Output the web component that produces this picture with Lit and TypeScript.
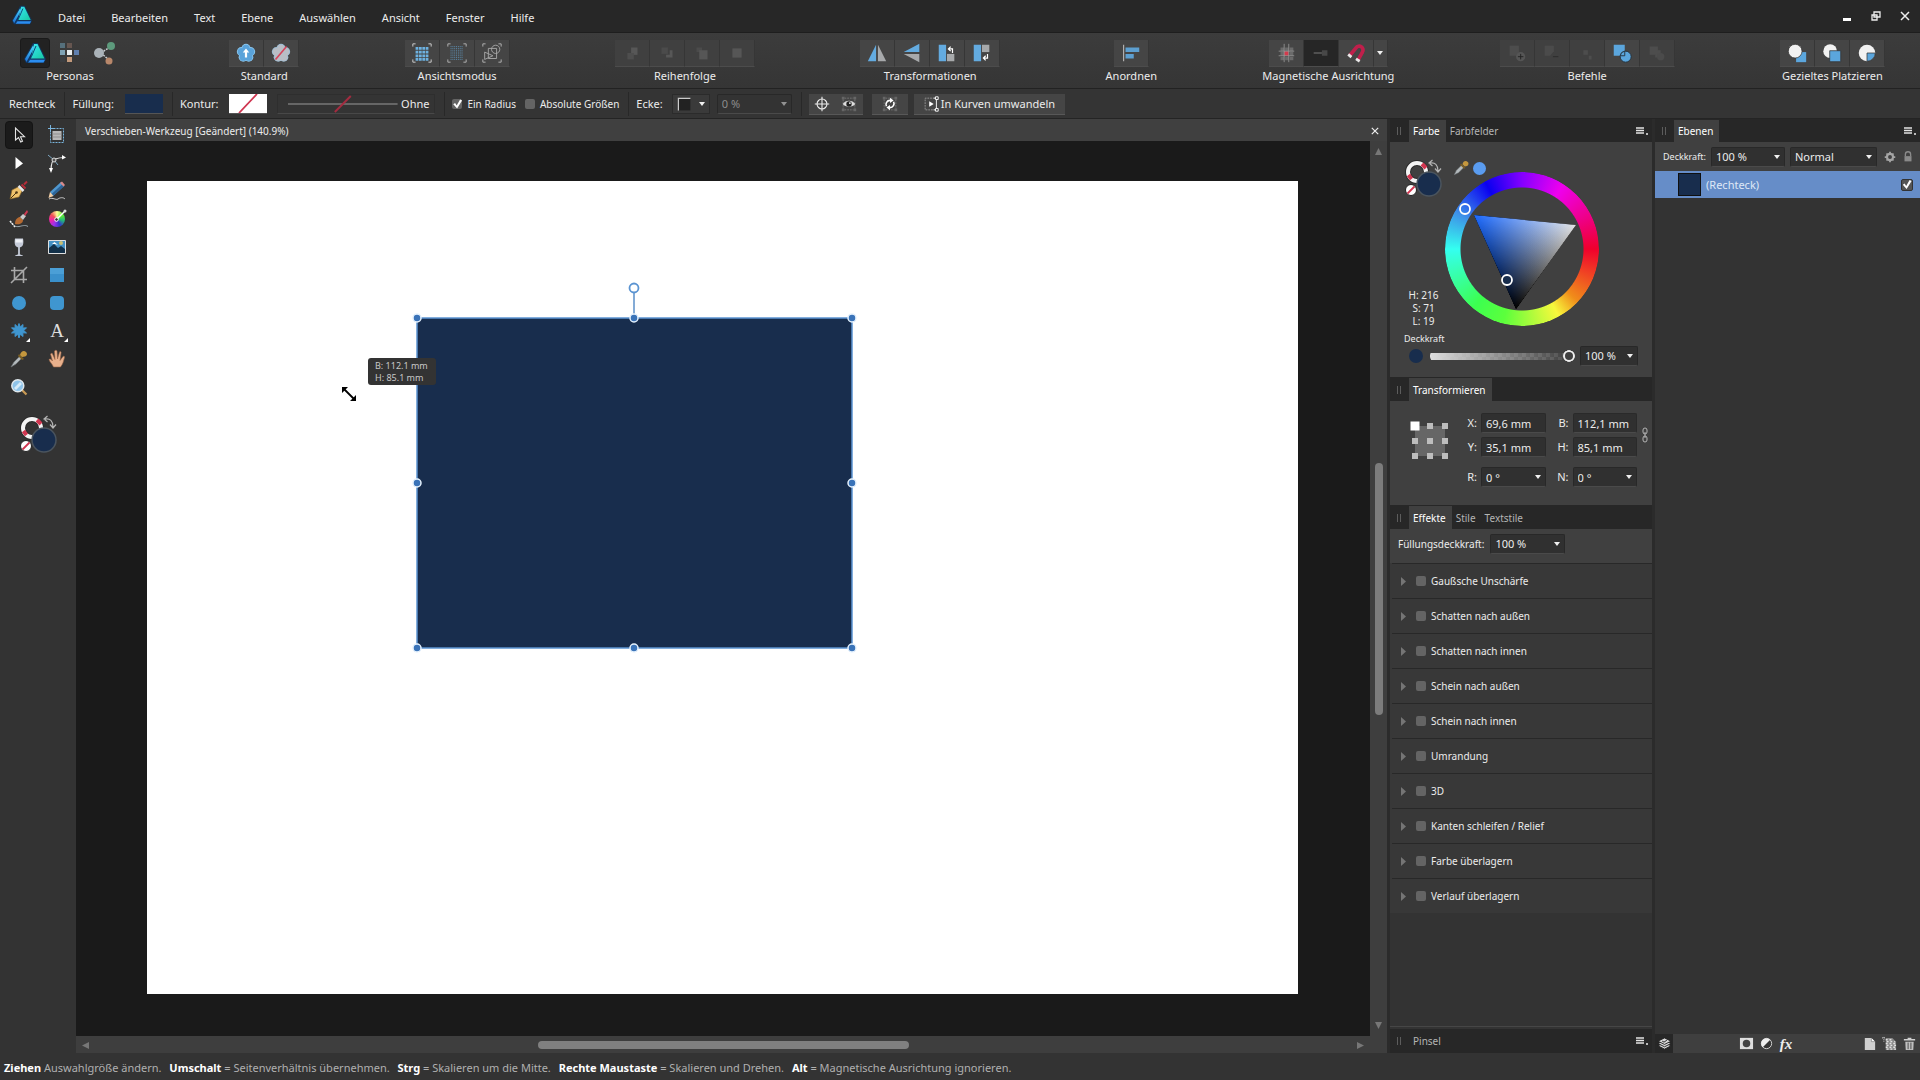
import { LitElement, html, svg, css, nothing, TemplateResult } from "lit";
import { customElement, state } from "lit/decorators.js";

type Icon = TemplateResult;

const NAVY = "#182d4d";

const logo = (id: string): Icon => html`
  <svg viewBox="0 0 24 24">
    <defs>
      <linearGradient id="${id}a" x1="0" y1="0" x2="1" y2="1">
        <stop offset="0" stop-color="#37e6f5" /><stop offset="1" stop-color="#17c9a0" />
      </linearGradient>
      <linearGradient id="${id}b" x1="0" y1="0" x2="0" y2="1">
        <stop offset="0" stop-color="#4ad9ff" /><stop offset="1" stop-color="#1c6fd6" />
      </linearGradient>
    </defs>
    <path d="M10 2h5l8 16-2 4H3l-2-4z" fill="#12345c" />
    <path d="M11 3h3.5l7 14.500H8z" fill="url(#${id}a)" />
    <path d="M10 4.500 2 18l1.500 3L11 7z" fill="url(#${id}b)" />
    <path d="M7 18.800h15L20.500 21.500H5z" fill="#2b8df0" />
    <path d="M13 5 8.500 15.500l-3.500 5" fill="none" stroke="#0f3f78" />
  </svg>`;

const petals = (fill: string, edge: string) => html`<svg viewBox="0 0 24 24">
    <g fill=${edge}><circle cx="12" cy="7" r="5" /><circle cx="17" cy="10.500" r="5" /><circle cx="15" cy="16.500" r="5" /><circle cx="9" cy="16.500" r="5" /><circle cx="7" cy="10.500" r="5" /></g>
    <g fill=${fill}><circle cx="12" cy="7" r="4" /><circle cx="17" cy="10.500" r="4" /><circle cx="15" cy="16.500" r="4" /><circle cx="9" cy="16.500" r="4" /><circle cx="7" cy="10.500" r="4" /><circle cx="12" cy="12" r="5" /></g>
    ${fill === "#5aa3da"
      ? svg`<path d="M12 7l3.500 4.500h-2.300V17h-2.400v-5.500H8.500z" fill="#fff" />`
      : svg`<path d="M6 19 18 5" stroke="#d6455c" stroke-width="1.800" />`}
  </svg>`;

const icons: Record<string, Icon> = {
  pixel: html`<svg viewBox="0 0 24 24">
    <path d="M2 2h5v5H2z" fill="#56707c" /><path d="M9 2h5v5H9z" fill="#665650" />
    <path d="M2 9h5v5H2z" fill="#7fa3b5" /><path d="M9 9h5v5H9z" fill="#e9eef0" /><path d="M16 9h5v5h-5z" fill="#5f7fae" />
    <path d="M9 16h5v5H9z" fill="#c39a7c" /><path d="M2 16h5v5H2z" fill="#3c3f42" /></svg>`,
  share: html`<svg viewBox="0 0 24 24">
    <path d="M8 12l9-6M8 12l8 7" stroke="#c8cccf" stroke-width="1.500" stroke-dasharray="2 1" />
    <circle cx="6" cy="12" r="5" fill="#aab2b8" /><circle cx="18" cy="5" r="4" fill="#5d9a7c" /><circle cx="16" cy="20" r="3.500" fill="#b8876a" /></svg>`,
  flower: petals("#5aa3da", "#8cc6ec"),
  flowerOff: petals("#b9bec6", "#9dbdd4"),
  gridA: html`<svg viewBox="0 0 24 24">
    <path d="M2 5V2h3M19 2h3v3M22 19v3h-3M5 22H2v-3" fill="none" stroke="#d4d4d4" />
    <path d="M5 7h14M5 11h14M5 15h14M5 19h14" stroke="#6db1e0" stroke-width="3" stroke-dasharray="3 .7" /></svg>`,
  gridB: html`<svg viewBox="0 0 24 24">
    <path d="M2 5V2h3M19 2h3v3M22 19v3h-3M5 22H2v-3" fill="none" stroke="#b8b8b8" />
    <path d="M5 5h14M5 7h14M5 9h14M5 11h14M5 13h14M5 15h14M5 17h14M5 19h14" stroke="#5d8fb3" stroke-dasharray="1 1" /></svg>`,
  outline: html`<svg viewBox="0 0 24 24">
    <path d="M2 5V2h3M19 2h3v3M22 19v3h-3M5 22H2v-3" fill="none" stroke="#b8b8b8" />
    <g fill="none" stroke="#a9a9a9"><circle cx="16" cy="8" r="4.500" /><path d="M8 7h9v11H8zM4 11l9 4-9 4z" /></g></svg>`,
  ord1: html`<svg viewBox="0 0 24 24"><path d="M11 6h7v8h-7z" fill="#575757" /><path d="M7 12h7v7H7z" fill="#4e4e4e" /></svg>`,
  ord2: html`<svg viewBox="0 0 24 24"><path d="M6 6h7v7H6z" fill="#4b4b4b" /><path d="M11 17h7V9h-3v5h-4z" fill="#575757" /></svg>`,
  ord3: html`<svg viewBox="0 0 24 24"><path d="M6 6h6v5H6z" fill="#4b4b4b" /><path d="M9 9h9v10H9z" fill="#565656" /></svg>`,
  ord4: html`<svg viewBox="0 0 24 24"><path d="M7 7h10v10H7z" fill="#565656" /></svg>`,
  flipH: html`<svg viewBox="0 0 24 24"><path d="M11 3v18H2z" fill="#63abe0" /><path d="M13 3v18h9z" fill="#a7a9ab" /></svg>`,
  flipV: html`<svg viewBox="0 0 24 24"><path d="M20 2v9H3z" fill="#63abe0" /><path d="M20 22v-9H3z" fill="#a7a9ab" /></svg>`,
  rotL: html`<svg viewBox="0 0 24 24"><path d="M3 3h8v18H3z" fill="#63abe0" /><path d="M12 13h8v8h-8z" fill="#a7a9ab" />
    <path d="M14 7.500h4V12M16 5l-2.500 2.500L16 10" fill="none" stroke="#fff" stroke-width="1.300" /></svg>`,
  rotR: html`<svg viewBox="0 0 24 24"><path d="M3 3h8v18H3z" fill="#63abe0" /><path d="M12 3h8v8h-8z" fill="#a7a9ab" />
    <path d="M14 17.500h4V13M16 15l-2.500 2.500L16 20" fill="none" stroke="#fff" stroke-width="1.300" /></svg>`,
  align: html`<svg viewBox="0 0 24 24"><path d="M4 3v18" stroke="#d0d0d0" /><path d="M6 6h15v5H6zM6 13h9v5H6z" fill="#5d9fd0" /></svg>`,
  snapGrid: html`<svg viewBox="0 0 24 24"><path d="M6 6h4v4H6zM11 6h4v4h-4zM16 6h4v4h-4zM6 11h4v4H6zM16 11h4v4h-4zM6 16h4v4H6zM11 16h4v4h-4zM16 16h4v4h-4z" fill="#6a6a6a" />
    <path d="M10 10h5v5h-5z" fill="#d43a4c" /><path d="M10 2v20M15 2v20M4 10h17M4 15h17" stroke="#a0a0a0" stroke-width=".800" /></svg>`,
  snapLine: html`<svg viewBox="0 0 24 24"><path d="M4 12h9" stroke="#555" stroke-width="2" /><path d="M13 9h6v6h-6z" fill="#484848" /></svg>`,
  magnet: html`<svg viewBox="0 0 24 24"><path d="M5 15l7-8.500a4 4 0 0 1 7 4.500l-5 9" fill="none" stroke="#c01f4b" stroke-width="4" />
    <path d="M3.500 13.500l3.500 3M12 18.500l4 2.500" stroke="#e8e8e8" stroke-width="3" /></svg>`,
  caret: html`<svg viewBox="0 0 8 8"><path d="M1 2h6L4 6z" fill="#f0f0f0" /></svg>`,
  add: html`<svg viewBox="0 0 24 24"><path d="M4 4h10v11H4z" fill="#4d4d4d" /><circle cx="16" cy="16" r="5" fill="#555" /><path d="M16 13v6M13 16h6" stroke="#222" /></svg>`,
  sub: html`<svg viewBox="0 0 24 24"><path d="M4 4h10v6l-4 5H4z" fill="#4b4b4b" /><path d="M13 16h6" stroke="#2a2a2a" /></svg>`,
  inter: html`<svg viewBox="0 0 24 24"><path d="M8 9h5v5H8zM14 15h3v4h-3z" fill="#4d4d4d" /></svg>`,
  divide: html`<svg viewBox="0 0 24 24"><path d="M3 3h12v12H3z" fill="#5ba6dd" /><circle cx="16" cy="16" r="6" fill="#5ba6dd" stroke="#23313c" />
    <path d="M15 10v5h-5a6 6 0 0 1 5-5z" fill="#5ba6dd" stroke="#23313c" /></svg>`,
  combine: html`<svg viewBox="0 0 24 24"><path d="M4 5h9v4h3v8h-6v-3H4z" fill="#4d4d4d" /><circle cx="16" cy="16" r="4" fill="#4b4b4b" /></svg>`,
  place1: html`<svg viewBox="0 0 24 24"><path d="M11 11h11v11H11z" fill="#5ba6dd" /><circle cx="10" cy="10" r="7.500" fill="#f2f2f2" stroke="#333" stroke-width=".800" /></svg>`,
  place2: html`<svg viewBox="0 0 24 24"><circle cx="10" cy="10" r="7.500" fill="#f2f2f2" /><path d="M9.500 9.500h12v12h-12z" fill="#5ba6dd" stroke="#333" stroke-width=".800" /></svg>`,
  place3: html`<svg viewBox="0 0 24 24"><circle cx="12" cy="12" r="9" fill="#f2f2f2" /><path d="M12 12h9a9 9 0 0 1-9 9z" fill="#5ba6dd" stroke="#333" stroke-width=".800" /></svg>`,
  target: html`<svg viewBox="0 0 20 20"><circle cx="10" cy="10" r="5.500" fill="none" stroke="#eee" stroke-width="1.200" /><path d="M10 2v16M2 10h16" stroke="#eee" stroke-width="1.200" /></svg>`,
  eye: html`<svg viewBox="0 0 20 20"><path d="M5 3.500h10M5 16.500h10M3.500 5v10M16.500 5v10" stroke="#777" stroke-dasharray="2 1" /><path d="M2 2h3v3H2zM15 2h3v3h-3zM2 15h3v3H2zM15 15h3v3h-3z" fill="#666" />
    <path d="M3 10c3-5 11-5 14 0-3 4-11 4-14 0z" fill="#ddd" /><circle cx="10" cy="10" r="3" fill="#222" /><circle cx="11" cy="9" r="1" fill="#fff" /></svg>`,
  cycle: html`<svg viewBox="0 0 20 20"><path d="M5 3.500h10M5 16.500h10M3.500 5v10M16.500 5v10" stroke="#777" stroke-dasharray="2 1" /><path d="M2 2h3v3H2zM15 2h3v3h-3zM2 15h3v3H2zM15 15h3v3h-3z" fill="#666" />
    <path d="M6 12.500a4.500 4.500 0 0 1 4-6.500M14 7.500a4.500 4.500 0 0 1-4 6.500" fill="none" stroke="#fff" stroke-width="1.800" /><path d="M10 3l4 3-4 3zM10 17l-4-3 4-3z" fill="#fff" /></svg>`,
  curves: html`<svg viewBox="0 0 20 20"><path d="M14 3.500H3.500v13H14" fill="none" stroke="#999" stroke-dasharray="2 1" /><path d="M8 7l5 3-5 3z" fill="#fff" />
    <path d="M13 3.500h3v13h-3" fill="none" stroke="#fff" /><path d="M15 2h3v3h-3zM15 15h3v3h-3z" fill="#444" stroke="#fff" /></svg>`,
  corner: html`<svg viewBox="0 0 20 20"><path d="M3 18V3h15v15" fill="#222" /><path d="M3 18V3h15" fill="none" stroke="#ccc" stroke-width="1.500" /></svg>`,
  grip: html`<svg viewBox="0 0 4 8"><path d="M.5 0v8M3.500 0v8" stroke="#5c5c5c" /></svg>`,
  menu: html`<svg viewBox="0 0 12 8"><path d="M0 1h8M0 3.500h8M0 6h8" stroke="#e4e4e4" stroke-width="1.500" /><path d="M10 6h2v2h-2z" fill="#bbb" /></svg>`,
  pipette: html`<svg viewBox="0 0 24 24"><path d="M3 21l3-6 7-7 3 3-7 7z" fill="#b4babd" stroke="#6d7376" stroke-width=".700" /><path d="M12 6l6 6-2 1-5-5z" fill="#7a5e22" /><path d="M14 7c1-5 5-5 7-3s1 6-4 6z" fill="#c4973d" /></svg>`,
  gear: html`<svg viewBox="0 0 16 16"><circle cx="8" cy="8" r="3.500" fill="none" stroke="#a5a5a5" stroke-width="2.500" /><path d="M8 2v2M8 12v2M2 8h2M12 8h2M4 4l1 1M11 11l1 1M12 4l-1 1M5 11l-1 1" stroke="#a5a5a5" stroke-width="2" /></svg>`,
  lock: html`<svg viewBox="0 0 16 16"><path d="M5 7V5a3 3 0 0 1 6 0v2" fill="none" stroke="#8a8a8a" stroke-width="1.500" /><path d="M4 7h8v6H4z" fill="#8a8a8a" /></svg>`,
  chain: html`<svg viewBox="0 0 8 16"><g fill="none" stroke="#b4b4b4"><rect x="2" y="1" width="4" height="6" rx="2" /><rect x="2" y="9" width="4" height="6" rx="2" /><path d="M4 5v6" /></g></svg>`,
  layers: html`<svg viewBox="0 0 16 16"><path d="M8 7l7 3.500L8 14l-7-3.500z" fill="#d8d8d8" stroke="#222" /><path d="M8 4.500L15 8l-7 3.500L1 8z" fill="#d8d8d8" stroke="#222" /><path d="M8 2l7 3.500L8 9 1 5.500z" fill="#d8d8d8" stroke="#222" /><path d="M5.500 5.500l2 1 3-2" fill="none" stroke="#222" /></svg>`,
  mask: html`<svg viewBox="0 0 16 16"><path d="M1 2h14v12H1z" fill="#dedede" /><circle cx="8" cy="8" r="4" fill="#444" /></svg>`,
  adjust: html`<svg viewBox="0 0 16 16"><circle cx="8" cy="8" r="5.500" fill="#333" stroke="#d8d8d8" /><path d="M12 4a5.500 5.500 0 1 0-8 8z" fill="#eee" /></svg>`,
  doc: html`<svg viewBox="0 0 16 16"><path d="M3 2h7l4 4v9H3z" fill="#cfcfcf" /><path d="M10 2v4h4" fill="#fff" stroke="#777" stroke-width=".700" /></svg>`,
  pixelDoc: html`<svg viewBox="0 0 16 16"><path d="M4 2h7l4 4v9H4z" fill="#8a8a8a" /><path d="M4 4h8M5 6h9M4 8h11M5 10h10M4 12h11M5 14h10" stroke="#e2e2e2" stroke-dasharray="2 2" stroke-width="1.500" /><path d="M0 2h4M2 1v5" stroke="#ddd" stroke-dasharray="1 1" /></svg>`,
  trash: html`<svg viewBox="0 0 16 16"><path d="M2 4h12M6 2.500h4" stroke="#d0d0d0" stroke-width="1.500" /><path d="M3.500 6h9l-.5 9H4z" fill="#c0c0c0" /><path d="M6.500 7v7M9.500 7v7" stroke="#444" /></svg>`,
};

const toolIcons: Array<[string, Icon]> = [
  ["Verschieben", html`<svg viewBox="0 0 24 24"><path d="M8.500 5v12l3-2.500 2.200 4.500 1.800-.8-2-4.500h4z" fill="#1c1c1c" stroke="#e4e4e4" stroke-width="1.100" /></svg>`],
  ["Zeichenfläche", html`<svg viewBox="0 0 24 24"><path d="M5.500 5.500h13v14h-13z" fill="none" stroke="#79b4dc" stroke-dasharray="2 1" /><path d="M7.500 8h9v9h-9z" fill="#b9b9b9" /><path d="M7.500 11h9M7.500 14h9" stroke="#8f8f8f" /><path d="M5.500 2v7M3 5.500h6" stroke="#79b4dc" /></svg>`],
  ["Knoten", html`<svg viewBox="0 0 24 24"><path d="M8.500 6v12l7.500-5.500z" fill="#fff" /></svg>`],
  ["Ecken", html`<svg viewBox="0 0 24 24"><path d="M6 20c0-5 1-11 4-12s7-1.500 10-1.500" fill="none" stroke="#e6e6e6" stroke-width="1.200" /><path d="M3 4l6 5 4 5" fill="none" stroke="#7fa9c4" /><circle cx="9" cy="9" r="2" fill="#555" stroke="#ddd" /><path d="M17 4l4 2.500-4 2zM4 17l2 5 2-5z" fill="#fff" /></svg>`],
  ["Zeichenstift", html`<svg viewBox="0 0 24 24"><path d="M3 20l2-9 6-3 4 4-3 6z" fill="#efc26b" stroke="#8c6424" stroke-width=".600" /><path d="M3.500 19.500l6-6" stroke="#4a3413" /><circle cx="9.500" cy="13.500" r="1.300" fill="#4a3413" /><path d="M11.500 7l5 5" stroke="#e8e8e8" stroke-width="2.500" /><path d="M14.500 5.500l4 4M17 5.500l3-3" stroke="#b42d3a" stroke-width="2" /></svg>`],
  ["Buntstift", html`<svg viewBox="0 0 24 24"><path d="M5 13L16 3l3 4L8 17z" fill="#4f97cf" /><path d="M6.500 15L17.500 5l2 2L8 17z" fill="#2d6497" /><path d="M5 13l3.500 4-5 2z" fill="#f2cfa6" /><path d="M15 4l2-1.500 3 3.500-1.500 1.500z" fill="#d98a8a" /><path d="M4 20c4-2 7 1.500 9 0s5-2 7 0" fill="none" stroke="#cfcfcf" /></svg>`],
  ["Pinsel", html`<svg viewBox="0 0 24 24"><path d="M8 17c0-5 3-7 5-7l3 3c0 3-3 5-8 4z" fill="#b56a32" /><path d="M13 10l3-3 3 2-3 4z" fill="#c9c9c9" /><path d="M17 7l3-4 1 2-3 4z" fill="#d03a52" /><path d="M3 14c3 5 6 6 9 5.500s6-2 9 0" fill="none" stroke="#9aa7ad" /><path d="M3 14l5 6" stroke="#eee" stroke-width="1.500" stroke-dasharray="2 1" /></svg>`],
  ["Füllung", html`<span class="tool-wheel"></span><svg viewBox="0 0 24 24"><path d="M12 12L20 4" stroke="#fff" stroke-width="1.500" /><circle cx="20" cy="4" r="1.500" fill="#ddd" /><circle cx="11.500" cy="12.500" r="1.800" fill="#333" stroke="#fff" /></svg>`],
  ["Transparenz", html`<svg viewBox="0 0 24 24"><path d="M8 3.500h8c1 5 0 9-4 9s-5-4-4-9z" fill="#c5cbd8" /><path d="M8.500 4.500h7v3h-7z" fill="#eef1f6" /><path d="M12 12v8" stroke="#c5cbd8" stroke-width="1.800" /><path d="M8 21c1-2 7-2 8 0z" fill="#c5cbd8" /></svg>`],
  ["Bild platzieren", html`<svg viewBox="0 0 24 24"><path d="M3.500 5.500h17v13h-17z" fill="#4591c4" stroke="#e0e0e0" /><path d="M4 13l5-4 4 4 3-2 4 3v4H4z" fill="#123049" /><path d="M7 9l2.500-2L13 10l-3-1z" fill="#fff" /><circle cx="16" cy="8" r="2" fill="#c9bf73" /></svg>`],
  ["Beschneiden", html`<svg viewBox="0 0 24 24"><path d="M7.500 4v12.500H20M4 7.500h12.500V20M4 20L20 4" fill="none" stroke="#a8a8a8" stroke-width="1.600" /></svg>`],
  ["Rechteck", html`<svg viewBox="0 0 24 24"><path d="M5 5h14v14H5z" fill="#3a90cb" /><path d="M5 5h14v6H5z" fill="#4b9fd6" /></svg>`],
  ["Ellipse", html`<svg viewBox="0 0 24 24"><circle cx="12" cy="12" r="7" fill="#3f96d0" /></svg>`],
  ["Abgerundetes Rechteck", html`<svg viewBox="0 0 24 24"><rect x="5" y="5" width="14" height="14" rx="4" fill="#3f96d0" /></svg>`],
  ["Stern", html`<svg viewBox="0 0 24 24"><path d="M12 4.500l1.200 3.500L16 5.500l-.2 3.600 3.700-.3-2.700 2.700 2.700 2.500-3.700-.2.2 3.700-2.800-2.300L12 19l-1.200-3.800L8 17.500l.2-3.700-3.700.2 2.700-2.500-2.700-2.700 3.700.3L8 5.500 10.800 8z" fill="#3f96d0" stroke="#3f96d0" /><path d="M23 19v4h-4z" fill="#fff" /></svg>`],
  ["Text", html`<svg viewBox="0 0 24 24"><path d="M23 19v4h-4z" fill="#fff" /></svg>`],
  ["Farbpipette", html`<svg viewBox="0 0 24 24"><path d="M4 20l3-5 6-6 2 2-6 6z" fill="#b4babd" stroke="#6d7376" stroke-width=".700" /><path d="M12 7l5 5-2 1-4-4z" fill="#7a5e22" /><path d="M13 8c1-4 4-5 6-3s1 5-4 5z" fill="#c4973d" /></svg>`],
  ["Ansicht", html`<svg viewBox="0 0 24 24"><path d="M8.500 20c-1-3-4-5-4.500-7.500 1-1 2.500 0 3.500 1.500L5.500 7c1-1 2-1 2.500 1l2 4.500L9.500 4c1-1 2-1 2.500 0l.5 8 2-7c1-1 2 0 1.500 1.500l-1 7L18 9.500c1-.8 1.800 0 1.500 1C18.500 14 18 17 15.500 20z" fill="#e8b08c" stroke="#9a6446" stroke-width=".600" /></svg>`],
  ["Zoom", html`<svg viewBox="0 0 24 24"><path d="M15 15l4.500 4.500" stroke="#c99a55" stroke-width="2.200" /><circle cx="10.800" cy="10.800" r="6" fill="#8fc4ea" stroke="#dfe7ec" stroke-width="1.500" /><path d="M7 13l6-6 2 2-6 6z" fill="#d6ecfa" /></svg>`],
];

const fillStroke = html`
  <svg class="fillstroke" viewBox="0 0 40 40">
    <circle cx="13" cy="13" r="9" fill="none" stroke="#2a2a2a" stroke-width="6" />
    <circle cx="13" cy="13" r="9" fill="none" stroke="#f4f4f4" stroke-width="4" />
    <path d="M18 5l4 4M4.500 16l3 4" stroke="#d13650" stroke-width="4" />
    <circle cx="25" cy="25" r="12" fill=${NAVY} stroke="#4a545e" stroke-width="1.500" />
    <circle cx="7" cy="31" r="5.500" fill="#fff" stroke="#222" /><path d="M3.500 34.500l7-7" stroke="#d13650" stroke-width="1.800" />
    <path d="M26 4c5-1 8 2 8 8M28.500 1L25 4l3.500 3M31 9.500l3 3.500 3-3.500" fill="none" stroke="#b5b5b5" stroke-width="1.200" />
  </svg>`;

const toolbarGroups: Array<{ label: string; items: Array<[string, string, string?]> }> = [
  { label: "Standard", items: [["flower", "Synchronisieren"], ["flowerOff", "Zurücksetzen"]] },
  { label: "Ansichtsmodus", items: [["gridA", "Pixel"], ["gridB", "Pixel Retina"], ["outline", "Gliederung"]] },
  { label: "Reihenfolge", items: [["ord1", "Ganz nach hinten", "off"], ["ord2", "Nach hinten", "off"], ["ord3", "Nach vorne", "off"], ["ord4", "Ganz nach vorne", "off"]] },
  { label: "Transformationen", items: [["flipH", "Horizontal spiegeln"], ["flipV", "Vertikal spiegeln"], ["rotL", "Nach links drehen"], ["rotR", "Nach rechts drehen"]] },
  { label: "Anordnen", items: [["align", "Ausrichtung"]] },
  { label: "Magnetische Ausrichtung", items: [["snapGrid", "Am Raster"], ["snapLine", "An Linien", "pressed"], ["magnet", "Magnet"], ["caret", "Optionen", "narrow"]] },
  { label: "Befehle", items: [["add", "Addieren", "off"], ["sub", "Subtrahieren", "off"], ["inter", "Schnittmenge", "off"], ["divide", "Teilen"], ["combine", "Kombinieren", "off"]] },
  { label: "Gezieltes Platzieren", items: [["place1", "Dahinter"], ["place2", "Davor"], ["place3", "Innen"]] },
];

const effects = ["Gaußsche Unschärfe", "Schatten nach außen", "Schatten nach innen", "Schein nach außen", "Schein nach innen",
  "Umrandung", "3D", "Kanten schleifen / Relief", "Farbe überlagern", "Verlauf überlagern"];

const hints: Array<[string, string]> = [
  ["Ziehen", " Auswahlgröße ändern. "],
  ["Umschalt", " = Seitenverhältnis übernehmen. "],
  ["Strg", " = Skalieren um die Mitte. "],
  ["Rechte Maustaste", " = Skalieren und Drehen. "],
  ["Alt", " = Magnetische Ausrichtung ignorieren."],
];

function handle(x: number, y: number) {
  return svg`<circle cx=${x} cy=${y} r="4" fill="#3a73b8" stroke="#e6f2fd" stroke-width="1.500" />`;
}

function anchorDot(x: number, y: number) {
  const first = x === 5 && y === 5;
  const s = first ? 9 : 6;
  return svg`<rect x=${x - s / 2} y=${y - s / 2} width=${s} height=${s} fill=${first ? "#fff" : "#bdbdbd"} />`;
}

@customElement("app-root")
export class AppRoot extends LitElement {
  @state() private tool = 0;

  static styles = css`
    :host { display: block; font: 11px/14px "Noto Sans", "Open Sans", sans-serif; color: #ececec; }
    *, *::before, *::after { box-sizing: border-box; }
    button, input, select { font: inherit; color: inherit; margin: 0; padding: 0; border: 0; background: none; border-radius: 0; }
    svg { display: block; }
    a { color: inherit; text-decoration: none; }
    .app { min-height: 100vh; display: flex; flex-direction: column; background: #333; }

    .menubar { display: flex; align-items: center; height: 33px; padding: 0 1px 0 11px; background: #272727; border-bottom: 1px solid #1e1e1e; }
    .menubar .logo { width: 22px; height: 22px; margin-bottom: 3px; }
    .menus { display: flex; gap: 26px; margin-left: 25px; flex: 1; padding-top: 4px; }
    .winbtn { width: 29px; height: 24px; display: grid; place-items: center; }
    .winbtn svg { width: 10px; height: 10px; }

    .toolbar { display: flex; justify-content: space-between; height: 56px; padding: 5px 35px 0 20px; background: linear-gradient(#3c3c3c, #353535); border-bottom: 1px solid #222; }
    .group { display: flex; flex-direction: column; align-items: center; line-height: 16px; white-space: nowrap; }
    .group-row { display: flex; align-items: center; height: 30px; }
    .tbtn { width: 35px; height: 27px; display: grid; place-items: center; background: #454545; border-right: 1px solid #363636; border-bottom: 1px solid #4c4c4c; }
    .tbtn svg { width: 22px; height: 22px; }
    .tbtn.off { background: #404040; }
    .tbtn.pressed { background: #262626; }
    .tbtn.narrow { width: 14px; }
    .tbtn.narrow svg { width: 8px; height: 8px; }
    .personas { margin-right: 4px; }
    .personas .group-row { gap: 5px; }
    .pbtn { width: 30px; height: 30px; display: grid; place-items: center; border-radius: 3px; }
    .pbtn svg { width: 24px; height: 24px; }
    .pbtn.active { background: #222; border: 1px solid #1a1a1a; }

    .context { display: flex; align-items: center; height: 30px; padding: 1px 9px 0; border-bottom: 1px solid #242424; background: #343434; white-space: nowrap; }
    .sep { width: 1px; height: 24px; background: #282828; margin: 0 7px 0 9px; }
    .swatch { width: 38px; height: 20px; margin-left: 11px; border-bottom: 1px solid #555; }
    .swatch.fill { background: #182d4d; }
    .swatch.none { background: #fff; }
    .stroke { width: 158px; height: 20px; margin-left: 10px; display: flex; align-items: center; justify-content: flex-end; gap: 3px; padding-right: 5px; border: 1px solid #2e2e2e; border-bottom-color: #484848; }
    .stroke svg { flex: 1; height: 18px; margin-left: 10px; }
    .check { display: inline-flex; align-items: center; gap: 5px; font-size: 10px; }
    .check + .check { margin-left: 9px; }
    input[type="checkbox"] { appearance: none; width: 10px; height: 10px; flex: none; border-radius: 2px; background: #646464; display: grid; place-items: center; }
    input[type="checkbox"]:checked::before { content: ""; width: 10px; height: 10px; background: #fff; clip-path: polygon(8% 52%, 26% 40%, 42% 64%, 76% 4%, 96% 14%, 46% 96%); }
    .cornerbtn { display: flex; align-items: center; justify-content: space-around; width: 38px; height: 20px; margin-left: 9px; border: 1px solid #2b2b2b; background: #3a3a3a; }
    .cornerbtn svg:first-child { width: 16px; height: 16px; }
    .cornerbtn svg:last-child { width: 8px; height: 8px; }

    .select { display: inline-grid; align-items: center; height: 20px; background: #303030; border: 1px solid #282828; border-bottom-color: #4a4a4a; border-radius: 2px; font-size: 11px; }
    .select select, .select svg { grid-area: 1 / 1; }
    .select select { appearance: none; width: 100%; height: 18px; padding: 0 16px 0 4px; outline: none; }
    .select svg { width: 8px; height: 8px; justify-self: end; margin-right: 3px; pointer-events: none; }
    .select.dim { margin-left: 7px; width: 75px; color: #8c8c8c; background: #333; }
    .select.dim svg { opacity: 0.5; }
    .cbtn { display: flex; align-items: center; justify-content: center; width: 27px; height: 21px; background: #454545; border-bottom: 1px solid #585858; }
    .cbtn svg { width: 18px; height: 18px; }
    .cbtn.wide { width: 36px; margin-left: 9px; }
    .cbtn.text { width: auto; margin-left: 6px; padding: 0 10px 0 8px; gap: 1px; }

    .work { flex: 1; display: flex; gap: 3px; background: #2b2b2b; }
    .left { flex: 1; display: flex; min-width: 0; }
    .tools { width: 76px; background: #333; padding: 2px 5px; display: flex; flex-direction: column; gap: 14px; }
    .toolgrid { display: grid; grid-template-columns: 28px 28px; column-gap: 10px; }
    .tool { width: 28px; height: 28px; display: grid; place-items: center; border-radius: 4px; }
    .tool > * { grid-area: 1 / 1; }
    .tool svg { width: 24px; height: 24px; }
    .tool.active { background: #1b1b1b; border: 1px solid #141414; }
    .tool .glyph { font: 19px/20px "Liberation Serif", serif; color: #ddd; }
    .tool-wheel { width: 16px; height: 16px; border-radius: 50%; background: conic-gradient(#ff9, #6e3, #2b7, #33c, #93e, #e2a, #e55, #ff9); }
    .fillstroke { width: 40px; height: 40px; }
    .tools .fillstroke { margin-left: 14px; }

    .doc { flex: 1; display: grid; grid-template: 22px 1fr 17px / 1fr 17px; background: #3e3e3e; min-width: 0; }
    .doctab { grid-column: 1 / 3; display: flex; align-items: center; justify-content: space-between; padding: 1px 8px 0 9px; background: #404040; }
    .doctab span { font-size: 10px; }
    .doctab button svg { width: 8px; height: 8px; }
    .canvas { background: #1a1a1a; padding: 40px 72px 42px 71px; display: grid; }
    .page { background: #fff; position: relative; min-height: 400px; }
    .selection { position: absolute; left: 263px; top: 99px; width: 449px; height: 376px; overflow: visible; }
    .tip { position: absolute; left: 221px; top: 177px; width: 68px; height: 27px; padding: 2px 7px 0; border-radius: 3px; background: #333; color: #c8c8c8; font-size: 9px; line-height: 12px; white-space: nowrap; }
    .cursor { position: absolute; left: 194px; top: 205px; width: 16px; height: 16px; }
    .vbar { display: flex; flex-direction: column; align-items: center; padding: 7px 0; }
    .vbar i { width: 8px; height: 252px; border-radius: 4px; background: #7c7c7c; }
    .hbar { display: flex; align-items: center; padding: 1px 6px 0; }
    .hbar i { width: 371px; height: 8px; border-radius: 4px; background: #808080; }
    .arrow { width: 7px; height: 7px; }
    .g1 { flex: 307; } .g2 { flex: 306; } .h1 { flex: 447; } .h2 { flex: 447; }

    .panels { width: 262px; display: flex; flex-direction: column; background: #333; font-size: 10px; }
    .head { display: flex; align-items: stretch; height: 24px; padding: 1px 4px 0 7px; background: #272727; }
    .head > svg { width: 4px; height: 8px; align-self: center; margin-right: 8px; flex: none; }
    .head.first { height: 23px; }
    .head.closed { padding-top: 0; }
    .tab { padding: 0 5px 0 4px; color: #b4b4b4; }
    .tab.on { background: #404040; color: #fff; padding-right: 6px; }
    .head .menu { margin-left: auto; }
    .menu svg { width: 12px; height: 8px; }
    .body { background: #404040; }

    .color { height: 235px; padding: 17px 14px 0 14px; }
    .colorgrid { display: grid; grid-template-columns: 41px 154px; grid-template-rows: 169px; }
    .colorleft { display: flex; flex-direction: column; justify-content: space-between; }
    .hsl { text-align: center; line-height: 13px; margin-right: 2px; }
    .wheel, .picker { grid-area: 1 / 2; }
    .wheel { margin-top: 13px; display: grid; height: 154px; }
    .wheel > * { grid-area: 1 / 1; width: 154px; height: 154px; }
    .ring { border-radius: 50%; background: conic-gradient(from 90deg, #f0002c, #f08c1a 12%, #f8f83c 17%, #5cff3c 29%, #3cff50 36%, #34fff0 50%, #3e92e8 58%, #0a00f0 67%, #8400ff 75%, #ee00ee 84%, #ee0090 92%, #f0002c); mask: radial-gradient(circle, transparent 61px, #000 62px); }
    .wheel svg { isolation: isolate; }
    .light { mix-blend-mode: plus-lighter; }
    .picker { display: flex; align-items: center; gap: 3px; align-self: start; margin-left: 7px; }
    .picker svg { width: 18px; height: 18px; }
    .picker i { width: 13px; height: 13px; border-radius: 50%; background: #5a9cf0; }
    .small { display: block; font-size: 9px; margin-top: 4px; }
    .oprow { display: flex; align-items: center; padding-left: 5px; }
    .oprow i { width: 14px; height: 14px; border-radius: 50%; background: #182d4d; margin-right: 7px; }
    .oprow input[type="range"] { appearance: none; flex: 1; min-width: 0; height: 12px; background: linear-gradient(90deg, #ddd, rgba(56, 56, 56, 0.8)), repeating-conic-gradient(#888 0 25%, #333 0 50%) 0 3px / 8px 8px; mask: linear-gradient(#000, #000) center / 100% 7px no-repeat, radial-gradient(circle at calc(100% - 6px) 50%, #000 6px, transparent 6px); border-radius: 5px; }
    .oprow input[type="range"]::-webkit-slider-thumb { appearance: none; width: 12px; height: 12px; border-radius: 50%; border: 2px solid #eee; background: #404040; }
    .oprow .select { width: 58px; margin-left: 5px; }

    .transform { display: grid; grid-template-columns: 40px 23px 1fr 19px 1fr 8px; grid-template-rows: 20px 20px 20px; gap: 4px; padding: 12px 3px 12px 20px; height: 104px; align-items: center; font-size: 11px; }
    .transform label { text-align: right; }
    .transform input { width: 100%; height: 20px; padding: 0 4px; background: #303030; border: 1px solid #2a2a2a; border-bottom-color: #4a4a4a; border-radius: 2px; }
    .anchor { grid-area: 1 / 1 / 3 / 2; width: 40px; height: 40px; align-self: end; margin-bottom: -4px; }
    .chain { grid-area: 1 / 6 / 3 / 7; }
    .chain svg { width: 8px; height: 16px; }
    .transform .last { align-self: end; margin-bottom: -6px; line-height: 20px; }
    .transform .select { width: 100%; }

    .fillop { display: flex; align-items: center; gap: 6px; height: 34px; padding: 0 8px 5px; }
    .fillop .select { width: 75px; }
    .effects { margin: 0; padding: 0 0 0 2px; list-style: none; background: #383838; }
    .effects li { display: flex; align-items: center; height: 35px; padding-left: 8px; border-top: 1px solid #282828; }
    .effects button svg { width: 7px; height: 9px; }
    .effects .check { margin-left: 9px; }
    .rest { flex: 1; border-bottom: 1px solid #464646; margin-bottom: 2px; }

    .layers { width: 265px; display: flex; flex-direction: column; background: #333; font-size: 10px; }
    .opts { display: flex; align-items: center; height: 29px; padding: 0 5px 0 8px; background: #404040; }
    .opts label { font-size: 9px; margin-right: 5px; }
    .opts .select { width: 74px; }
    .opts .select.blend { flex: 1; margin: 0 2px 0 5px; }
    .opts button { margin-left: 4px; }
    .opts button svg { width: 14px; height: 14px; }
    .layer { display: flex; align-items: center; height: 27px; padding: 0 7px 0 23px; background: #668dc8; color: #dfe8f6; font-size: 11px; }
    .layer i { width: 23px; height: 23px; background: #182d4d; border: 1px solid #101010; margin-right: 5px; }
    .layer input { margin-left: auto; width: 12px; height: 12px; background: #555; border: 1px solid #333; }
    .grow { flex: 1; }
    .lfoot { display: flex; justify-content: space-between; height: 19px; background: #3f3f3f; padding-right: 1px; }
    .lfoot div { display: flex; align-items: center; }
    .lfoot button { width: 20px; height: 19px; display: grid; place-items: center; }
    .lfoot button svg { width: 15px; height: 15px; }
    .lfoot .cur { width: 18px; background: #272727; }
    .lfoot .fx { font: italic bold 15px/16px "Liberation Serif", serif; color: #eee; }

    .status { height: 27px; padding: 3px 4px 0; display: flex; align-items: center; gap: 5px; white-space: pre; color: #b0b0b0; }
    .status b { color: #fff; }
  `;

  private select(id: string, label: string, value: string, cls = "") {
    return html`<span class="select ${cls}"><select id=${id} aria-label=${label}><option>${value}</option></select>${icons.caret}</span>`;
  }

  private arrow(d: string) {
    return html`<svg class="arrow" viewBox="0 0 8 8"><path d=${d} fill="#777" /></svg>`;
  }

  private head(tabs: string[], menu: boolean, cls = "") {
    return html`<div class="head ${cls}">${icons.grip}
      ${tabs.map((t, i) => html`<button class="tab ${i === 0 && cls !== "closed" ? "on" : ""}">${t}</button>`)}
      ${menu ? html`<button class="menu" aria-label="Menü">${icons.menu}</button>` : nothing}</div>`;
  }

  private renderTop() {
    return html`
      <header class="menubar">
        <span class="logo">${logo("m")}</span>
        <nav class="menus">
          ${["Datei", "Bearbeiten", "Text", "Ebene", "Auswählen", "Ansicht", "Fenster", "Hilfe"].map((m) => html`<a href="#">${m}</a>`)}
        </nav>
        <button class="winbtn" aria-label="Minimieren"><svg viewBox="0 0 10 10"><path d="M1 7h8v3H1z" fill="#fff" /></svg></button>
        <button class="winbtn" aria-label="Wiederherstellen"><svg viewBox="0 0 10 10"><path d="M3 1h6v5H3zM1 4h5v5H1z" fill="#272727" stroke="#eee" stroke-width="1.300" /></svg></button>
        <button class="winbtn" aria-label="Schließen"><svg viewBox="0 0 10 10"><path d="M1 1l8 8M9 1L1 9" stroke="#eee" stroke-width="1.500" /></svg></button>
      </header>
      <div class="toolbar">
        <div class="group personas">
          <div class="group-row">
            <button class="pbtn active" aria-label="Designer">${logo("p")}</button>
            <button class="pbtn" aria-label="Pixel">${icons.pixel}</button>
            <button class="pbtn" aria-label="Export">${icons.share}</button>
          </div>
          <span>Personas</span>
        </div>
        ${toolbarGroups.map((g) => html`<div class="group">
          <div class="group-row">${g.items.map(([i, l, c]) => html`<button class="tbtn ${c ?? ""}" aria-label=${l}>${icons[i]}</button>`)}</div>
          <span>${g.label}</span></div>`)}
      </div>
      <div class="context">
        <span>Rechteck</span><span class="sep"></span>
        <span>Füllung:</span><button class="swatch fill" aria-label="Füllung"></button><span class="sep"></span>
        <span>Kontur:</span><button class="swatch none" aria-label="Kontur"><svg viewBox="0 0 38 19"><path d="M10 19L28 0" stroke="#cf3550" stroke-width="1.800" /></svg></button>
        <button class="stroke"><svg viewBox="0 0 110 18" preserveAspectRatio="none"><path d="M0 9h110" stroke="#999" /><path d="M47 17L63 1" stroke="#a32c40" stroke-width="2" /></svg>Ohne</button>
        <span class="sep"></span>
        <label class="check"><input type="checkbox" checked />Ein Radius</label>
        <label class="check"><input type="checkbox" />Absolute Größen</label>
        <span class="sep"></span>
        <span>Ecke:</span><button class="cornerbtn" aria-label="Ecke">${icons.corner}${icons.caret}</button>
        ${this.select("radius", "Eckenradius", "0 %", "dim")}
        <span class="sep"></span>
        <button class="cbtn" aria-label="Ursprung">${icons.target}</button>
        <button class="cbtn" aria-label="Auswahl ausblenden">${icons.eye}</button>
        <button class="cbtn wide" aria-label="Zyklus">${icons.cycle}</button>
        <button class="cbtn text">${icons.curves}In Kurven umwandeln</button>
      </div>`;
  }

  private renderDocument() {
    const handles = [[4, 4], [221, 4], [439, 4], [4, 169], [439, 169], [4, 334], [221, 334], [439, 334]];
    return html`
      <main class="doc">
        <div class="doctab"><span>Verschieben-Werkzeug [Geändert] (140.9%)</span>
          <button aria-label="Schließen"><svg viewBox="0 0 10 10"><path d="M1 1l8 8M9 1L1 9" stroke="#eee" stroke-width="1.500" /></svg></button></div>
        <div class="canvas"><div class="page">
          <svg class="selection" viewBox="0 0 449 376">
            <g transform="translate(3 34)">
              <path d="M4 4h435v330H4z" fill=${NAVY} stroke="#5b94d2" stroke-width="1.500" />
              <path d="M221 4v-26" stroke="#5b8fc8" stroke-width="1.500" />
              <circle cx="221" cy="-26" r="4.500" fill="#fff" stroke="#5b94d2" stroke-width="1.800" />
              ${handles.map(([x, y]) => handle(x, y))}
            </g>
          </svg>
          <div class="tip">B: 112.1 mm<br />H: 85.1 mm</div>
          <svg class="cursor" viewBox="0 0 16 16"><path d="M3 3l10 10" stroke="#000" stroke-width="1.800" /><path d="M1 1h6L1 7zM15 15H9l6-6z" /></svg>
        </div></div>
        <div class="vbar">${this.arrow("M4 0l4 8H0z")}<span class="g1"></span><i></i><span class="g2"></span>${this.arrow("M4 8L0 0h8z")}</div>
        <div class="hbar">${this.arrow("M0 4l8-4v8z")}<span class="h1"></span><i></i><span class="h2"></span>${this.arrow("M8 4L0 0v8z")}</div>
      </main>`;
  }

  private renderPanels() {
    const points = [5, 20, 35].flatMap((y) => [5, 20, 35].map((x) => [x, y]));
    return html`
      <aside class="panels">
        ${this.head(["Farbe", "Farbfelder"], true, "first")}
        <div class="body color">
          <div class="colorgrid">
            <div class="colorleft">${fillStroke}<div class="hsl">H: 216<br />S: 71<br />L: 19</div></div>
            <div class="wheel">
              <div class="ring"></div>
              <svg viewBox="0 0 154 154">
                <defs>
                  <linearGradient id="hue" gradientUnits="userSpaceOnUse" x1="29" y1="43" x2="101" y2="95"><stop offset="0" stop-color="#1f6cff" /><stop offset="1" stop-color="#000" /></linearGradient>
                  <linearGradient id="white" gradientUnits="userSpaceOnUse" x1="131" y1="53" x2="50" y2="89"><stop offset="0" stop-color="#e4e4e4" /><stop offset="1" stop-color="#000" /></linearGradient>
                </defs>
                <path d="M29 43l102 10-60 84z" fill="url(#hue)" /><path class="light" d="M29 43l102 10-60 84z" fill="url(#white)" />
                <circle cx="20" cy="37" r="5" fill="none" stroke="#fff" stroke-width="1.800" />
                <circle cx="62" cy="108" r="5" fill=${NAVY} stroke="#fff" stroke-width="1.800" />
              </svg>
            </div>
            <div class="picker">${icons.pipette}<i></i></div>
          </div>
          <label class="small" for="op">Deckkraft</label>
          <div class="oprow"><i></i><input id="op" type="range" value="100" />${this.select("opv", "Deckkraft", "100 %")}</div>
        </div>
        ${this.head(["Transformieren"], false)}
        <div class="body transform">
          <svg class="anchor" viewBox="0 0 40 40"><path d="M5 5h30v30H5z" fill="#666" />
            ${points.map(([x, y]) => anchorDot(x, y))}</svg>
          <label for="tx">X:</label><input id="tx" value="69,6 mm" />
          <label for="tb">B:</label><input id="tb" value="112,1 mm" />
          <button class="chain" aria-label="Seitenverhältnis">${icons.chain}</button>
          <label for="ty">Y:</label><input id="ty" value="35,1 mm" />
          <label for="th">H:</label><input id="th" value="85,1 mm" />
          <span></span>
          <label class="last" for="tr">R:</label>${this.select("tr", "R", "0 °", "last")}
          <label class="last" for="tn">N:</label>${this.select("tn", "N", "0 °", "last")}
        </div>
        ${this.head(["Effekte", "Stile", "Textstile"], false)}
        <div class="body fillop"><label for="fo">Füllungsdeckkraft:</label>${this.select("fo", "Füllungsdeckkraft", "100 %")}</div>
        <ul class="effects">
          ${effects.map((e) => html`<li><button aria-label="Aufklappen"><svg viewBox="0 0 7 9"><path d="M1 0l5 4.500L1 9z" fill="#757575" /></svg></button>
            <label class="check"><input type="checkbox" />${e}</label></li>`)}
        </ul>
        <div class="rest"></div>
        ${this.head(["Pinsel"], true, "closed")}
      </aside>`;
  }

  private renderLayers() {
    const b = (l: string, i: Icon, c = "") => html`<button class=${c} aria-label=${l}>${i}</button>`;
    return html`
      <aside class="layers">
        ${this.head(["Ebenen"], true, "first")}
        <div class="opts"><label for="lo">Deckkraft:</label>${this.select("lo", "Deckkraft", "100 %")}
          ${this.select("lb", "Mischmodus", "Normal", "blend")}${b("Optionen", icons.gear)}${b("Sperren", icons.lock)}</div>
        <div class="layer"><i></i><span>(Rechteck)</span><input type="checkbox" aria-label="Sichtbar" checked /></div>
        <div class="grow"></div>
        <div class="lfoot">
          <div>${b("Ebenen", icons.layers, "cur")}</div>
          <div>${b("Maske", icons.mask)}${b("Anpassung", icons.adjust)}<button class="fx">fx</button></div>
          <div>${b("Neue Ebene", icons.doc)}${b("Pixelebene", icons.pixelDoc)}${b("Löschen", icons.trash)}</div>
        </div>
      </aside>`;
  }

  render() {
    return html`
      <div class="app">
        ${this.renderTop()}
        <div class="work">
          <div class="left">
            <div class="tools">
              <div class="toolgrid">
                ${toolIcons.map(([name, icon], i) => html`<button class="tool ${i === this.tool ? "active" : ""}" aria-label=${name} @click=${() => (this.tool = i)}>
                  ${name === "Text" ? html`<span class="glyph">A</span>` : nothing}${icon}</button>`)}
              </div>
              ${fillStroke}
            </div>
            ${this.renderDocument()}
          </div>
          ${this.renderPanels()}
          ${this.renderLayers()}
        </div>
        <footer class="status">${hints.map(([k, t]) => html`<span><b>${k}</b>${t}</span>`)}</footer>
      </div>`;
  }
}
